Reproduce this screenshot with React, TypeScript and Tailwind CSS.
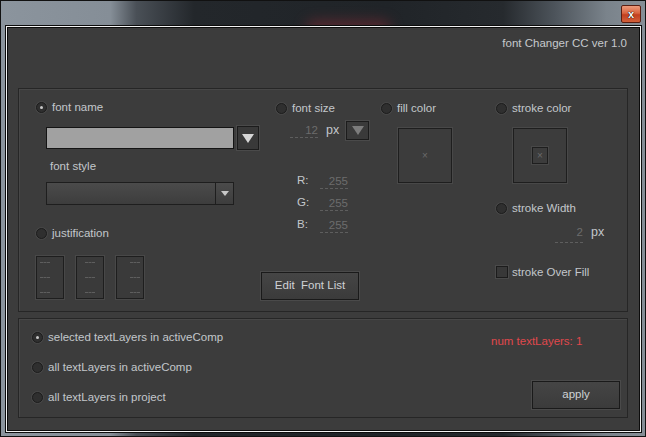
import React from 'react';

const Radio = ({ label, checked = false, gap = 'gap-[5px]' }: { label: string; checked?: boolean; gap?: string }) => (
  <div className={`flex items-center h-[14px] ${gap}`}>
    <span className="w-[11px] h-[11px] rounded-full border border-[#1c1c1c] bg-[#2f2f2f] shadow-[0_0_0_1px_#474747] flex items-center justify-center shrink-0">
      {checked && <span className="w-[3px] h-[3px] rounded-full bg-[#c8c8c8]" />}
    </span>
    <span className="leading-[14px] text-[#c3c7cb] whitespace-nowrap">{label}</span>
  </div>
);

const DashInput = ({ value, className = '' }: { value: string; className?: string }) => (
  <div className={`w-[28px] border-b border-dashed border-[#5e5e5e] text-right text-[#6c6c6c] leading-[14px] ${className}`}>
    {value}
  </div>
);

const JustBox = ({ align }: { align: 'justify-start' | 'justify-center' | 'justify-end' }) => (
  <div className="w-[28px] h-[43px] border border-[#1e1e1e] bg-[#3a3a3a] shadow-[0_0_0_1px_#484848] flex flex-col justify-between py-[5px] px-[3px]">
    {[0, 1, 2].map((i) => (
      <div key={i} className={`flex ${align}`}>
        <span className="w-[10px] border-t border-dashed border-[#5e5e5e]" />
      </div>
    ))}
  </div>
);

const SwatchBox = ({ inner = false }: { inner?: boolean }) => (
  <div className="ml-[17px] mt-[13px] w-[54px] h-[55px] border border-[#1e1e1e] shadow-[0_0_0_1px_#484848] bg-[#3c3c3c] flex items-center justify-center">
    {inner ? (
      <div className="w-[16px] h-[17px] border border-[#1e1e1e] shadow-[0_0_0_1px_#484848] flex items-center justify-center text-[10px] leading-none text-[#6a6a6a]">
        ×
      </div>
    ) : (
      <span className="text-[10px] leading-none text-[#6a6a6a]">×</span>
    )}
  </div>
);

export default function App() {
  return (
    <div className="relative w-[646px] h-[437px] overflow-hidden border border-[#111] bg-[linear-gradient(90deg,#8b949d_0%,#858e97_17%,#4a5057_21%,#23272b_30%,#202428_60%,#262a2e_78%,#4d545b_86%,#7a838b_94%,#868e96_100%)] font-['Liberation_Sans',Arial,sans-serif] text-[11.5px] select-none">
      {/* blurred background behind glass */}
      <div className="absolute left-[305px] top-[20px] w-[85px] h-[16px] rounded-full bg-[#6a2a32] blur-[7px] opacity-80" />

      {/* title bar */}
      <div className="relative h-[24px] flex justify-end items-start pt-[4px] pr-[4px]">
        <div className="w-[20px] h-[18px] rounded-[2px] border border-[#5a1e12] bg-[linear-gradient(180deg,#ec9a7c_0%,#d9643f_45%,#c2401f_55%,#d2603a_100%)] flex items-center justify-center">
          <span className="text-white font-bold text-[11px] leading-none [text-shadow:0_0_1px_#000,0_0_1px_#000]">x</span>
        </div>
      </div>

      {/* client frame */}
      <div className="relative ml-[4px] w-[637px] h-[408px] border border-[#0c0c0c]">
        <div className="w-full h-full border border-[#f2f2f2]">
          <div className="w-full h-full border border-[#0c0c0c] bg-[#3c3c3c] pt-[8px]">
            <div className="h-[14px] leading-[14px] text-right pr-[12px] text-[#c6c9cc]">font Changer CC ver 1.0</div>

            {/* upper panel */}
            <div className="mt-[38px] ml-[10px] w-[610px] h-[224px] border border-[#262626] shadow-[inset_1px_1px_0_#474747] flex pl-[17px] pt-[11px]">
              {/* col 1 */}
              <div className="w-[240px] flex flex-col">
                <Radio label="font name" checked />
                <div className="flex items-center mt-[12px] ml-[10px]">
                  <div className="w-[188px] h-[22px] bg-[#a1a1a1] border border-[#141414]" />
                  <div className="ml-[3px] w-[22px] h-[24px] bg-[#393939] border border-[#1c1c1c] shadow-[0_0_0_1px_#4a4a4a] flex items-center justify-center">
                    <span className="w-0 h-0 border-l-[6px] border-r-[6px] border-t-[9px] border-l-transparent border-r-transparent border-t-[#d6d6d6]" />
                  </div>
                </div>
                <div className="mt-[9px] ml-[14px] h-[14px] leading-[14px] text-[#c3c7cb]">font style</div>
                <div className="mt-[9px] ml-[10px] w-[188px] h-[23px] border border-[#1e1e1e] bg-[linear-gradient(180deg,#4b4b4b_0%,#3d3d3d_100%)] flex justify-end">
                  <div className="w-[18px] border-l border-[#1e1e1e] flex items-center justify-center">
                    <span className="w-0 h-0 border-l-[4px] border-r-[4px] border-t-[5px] border-l-transparent border-r-transparent border-t-[#c8c8c8]" />
                  </div>
                </div>
                <div className="mt-[21px]">
                  <Radio label="justification" />
                </div>
                <div className="mt-[16px] flex gap-[12px]">
                  <JustBox align="justify-start" />
                  <JustBox align="justify-center" />
                  <JustBox align="justify-end" />
                </div>
              </div>

              {/* col 2 */}
              <div className="w-[105px] flex flex-col">
                <div className="mt-[1px]">
                  <Radio label="font size" />
                </div>
                <div className="mt-[6px] h-[19px] flex items-center">
                  <DashInput value="12" className="ml-[14px]" />
                  <span className="ml-[8px] text-[#c3c7cb] text-[12.5px]">px</span>
                  <div className="ml-[7px] w-[23px] h-[19px] bg-[#3a3a3a] border border-[#1c1c1c] shadow-[0_0_0_1px_#4a4a4a] flex items-center justify-center">
                    <span className="w-0 h-0 border-l-[6px] border-r-[6px] border-t-[9px] border-l-transparent border-r-transparent border-t-[#7c7c7c]" />
                  </div>
                </div>
                <div className="mt-[30px] flex flex-col">
                  {['R:', 'G:', 'B:'].map((c) => (
                    <div key={c} className="h-[22px] flex items-center">
                      <span className="ml-[21px] w-[23px] text-[#c3c7cb]">{c}</span>
                      <DashInput value="255" />
                    </div>
                  ))}
                </div>
                <button className="mt-[36px] -ml-[15px] w-[98px] h-[28px] border border-[#1a1a1a] shadow-[0_0_0_1px_#4a4a4a] bg-[linear-gradient(180deg,#454545_0%,#3b3b3b_100%)] text-[#cfd2d5] text-[11.5px] whitespace-pre">
                  Edit  Font List
                </button>
              </div>

              {/* col 3 */}
              <div className="w-[115px] flex flex-col">
                <div className="mt-[1px]">
                  <Radio label="fill color" />
                </div>
                <SwatchBox />
              </div>

              {/* col 4 */}
              <div className="flex-1 flex flex-col">
                <div className="mt-[1px]">
                  <Radio label="stroke color" />
                </div>
                <SwatchBox inner />
                <div className="mt-[18px]">
                  <Radio label="stroke Width" />
                </div>
                <div className="mt-[10px] flex items-end h-[18px]">
                  <DashInput value="2" className="ml-[59px] h-[18px]" />
                  <span className="ml-[8px] mb-[1px] text-[#c3c7cb] text-[12.5px]">px</span>
                </div>
                <div className="mt-[22px] flex items-center gap-[4px] h-[14px]">
                  <span className="w-[12px] h-[12px] border border-[#1c1c1c] bg-[#383838] shadow-[0_0_0_1px_#4a4a4a]" />
                  <span className="text-[#c3c7cb] leading-[14px]">stroke Over Fill</span>
                </div>
              </div>
            </div>

            {/* lower panel */}
            <div className="mt-[6px] ml-[10px] w-[610px] h-[100px] border border-[#262626] shadow-[inset_1px_1px_0_#474747] flex justify-between pl-[13px] pt-[11px] pr-[7px]">
              <div className="flex flex-col gap-[16px]">
                <Radio label="selected textLayers in activeComp" checked />
                <Radio label="all textLayers in activeComp" />
                <Radio label="all textLayers in project" />
              </div>
              <div className="w-[129px] flex flex-col">
                <div className="mt-[4px] h-[14px] leading-[14px] text-[#e0484c]">num textLayers: 1</div>
                <button className="mt-[33px] self-end w-[88px] h-[28px] border border-[#1a1a1a] shadow-[0_0_0_1px_#4a4a4a] bg-[linear-gradient(180deg,#454545_0%,#3b3b3b_100%)] text-[#cfd2d5] text-[11.5px]">
                  apply
                </button>
              </div>
            </div>
          </div>
        </div>
      </div>
    </div>
  );
}
